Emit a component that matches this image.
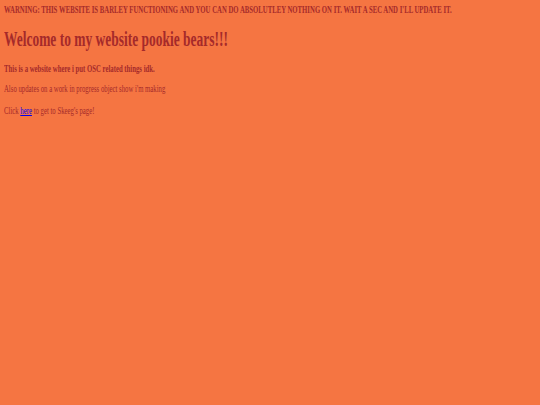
export default function App() {
  return (
    <div className="min-h-[405px] w-full overflow-hidden bg-[#f57542] text-[#a52a2a] px-[4px] pt-[4px]" style={{ fontFamily: '"Liberation Serif", serif' }}>
      <p className="origin-left scale-x-[0.675] whitespace-nowrap text-[10px] font-bold leading-[12px]">
        WARNING: THIS WEBSITE IS BARLEY FUNCTIONING AND YOU CAN DO ABSOLUTLEY NOTHING ON IT. WAIT A SEC AND I'LL UPDATE IT.
      </p>
      <h1 className="mt-[11px] origin-left scale-x-[0.673] whitespace-nowrap text-[20px] font-bold leading-[24px]">
        Welcome to my website pookie bears!!!
      </h1>
      <p className="mt-[12px] origin-left scale-x-[0.675] whitespace-nowrap text-[10px] font-bold leading-[12px]">
        This is a website where i put OSC related things idk.
      </p>
      <p className="mt-[8px] origin-left scale-x-[0.675] whitespace-nowrap text-[10px] leading-[12px]">
        Also updates on a work in progress object show i'm making
      </p>
      <p className="mt-[10px] origin-left scale-x-[0.675] whitespace-nowrap text-[10px] leading-[12px]">
        Click <a href="#" className="text-[#0000ee] underline">here</a> to get to Skeeg's page!
      </p>
    </div>
  );
}
